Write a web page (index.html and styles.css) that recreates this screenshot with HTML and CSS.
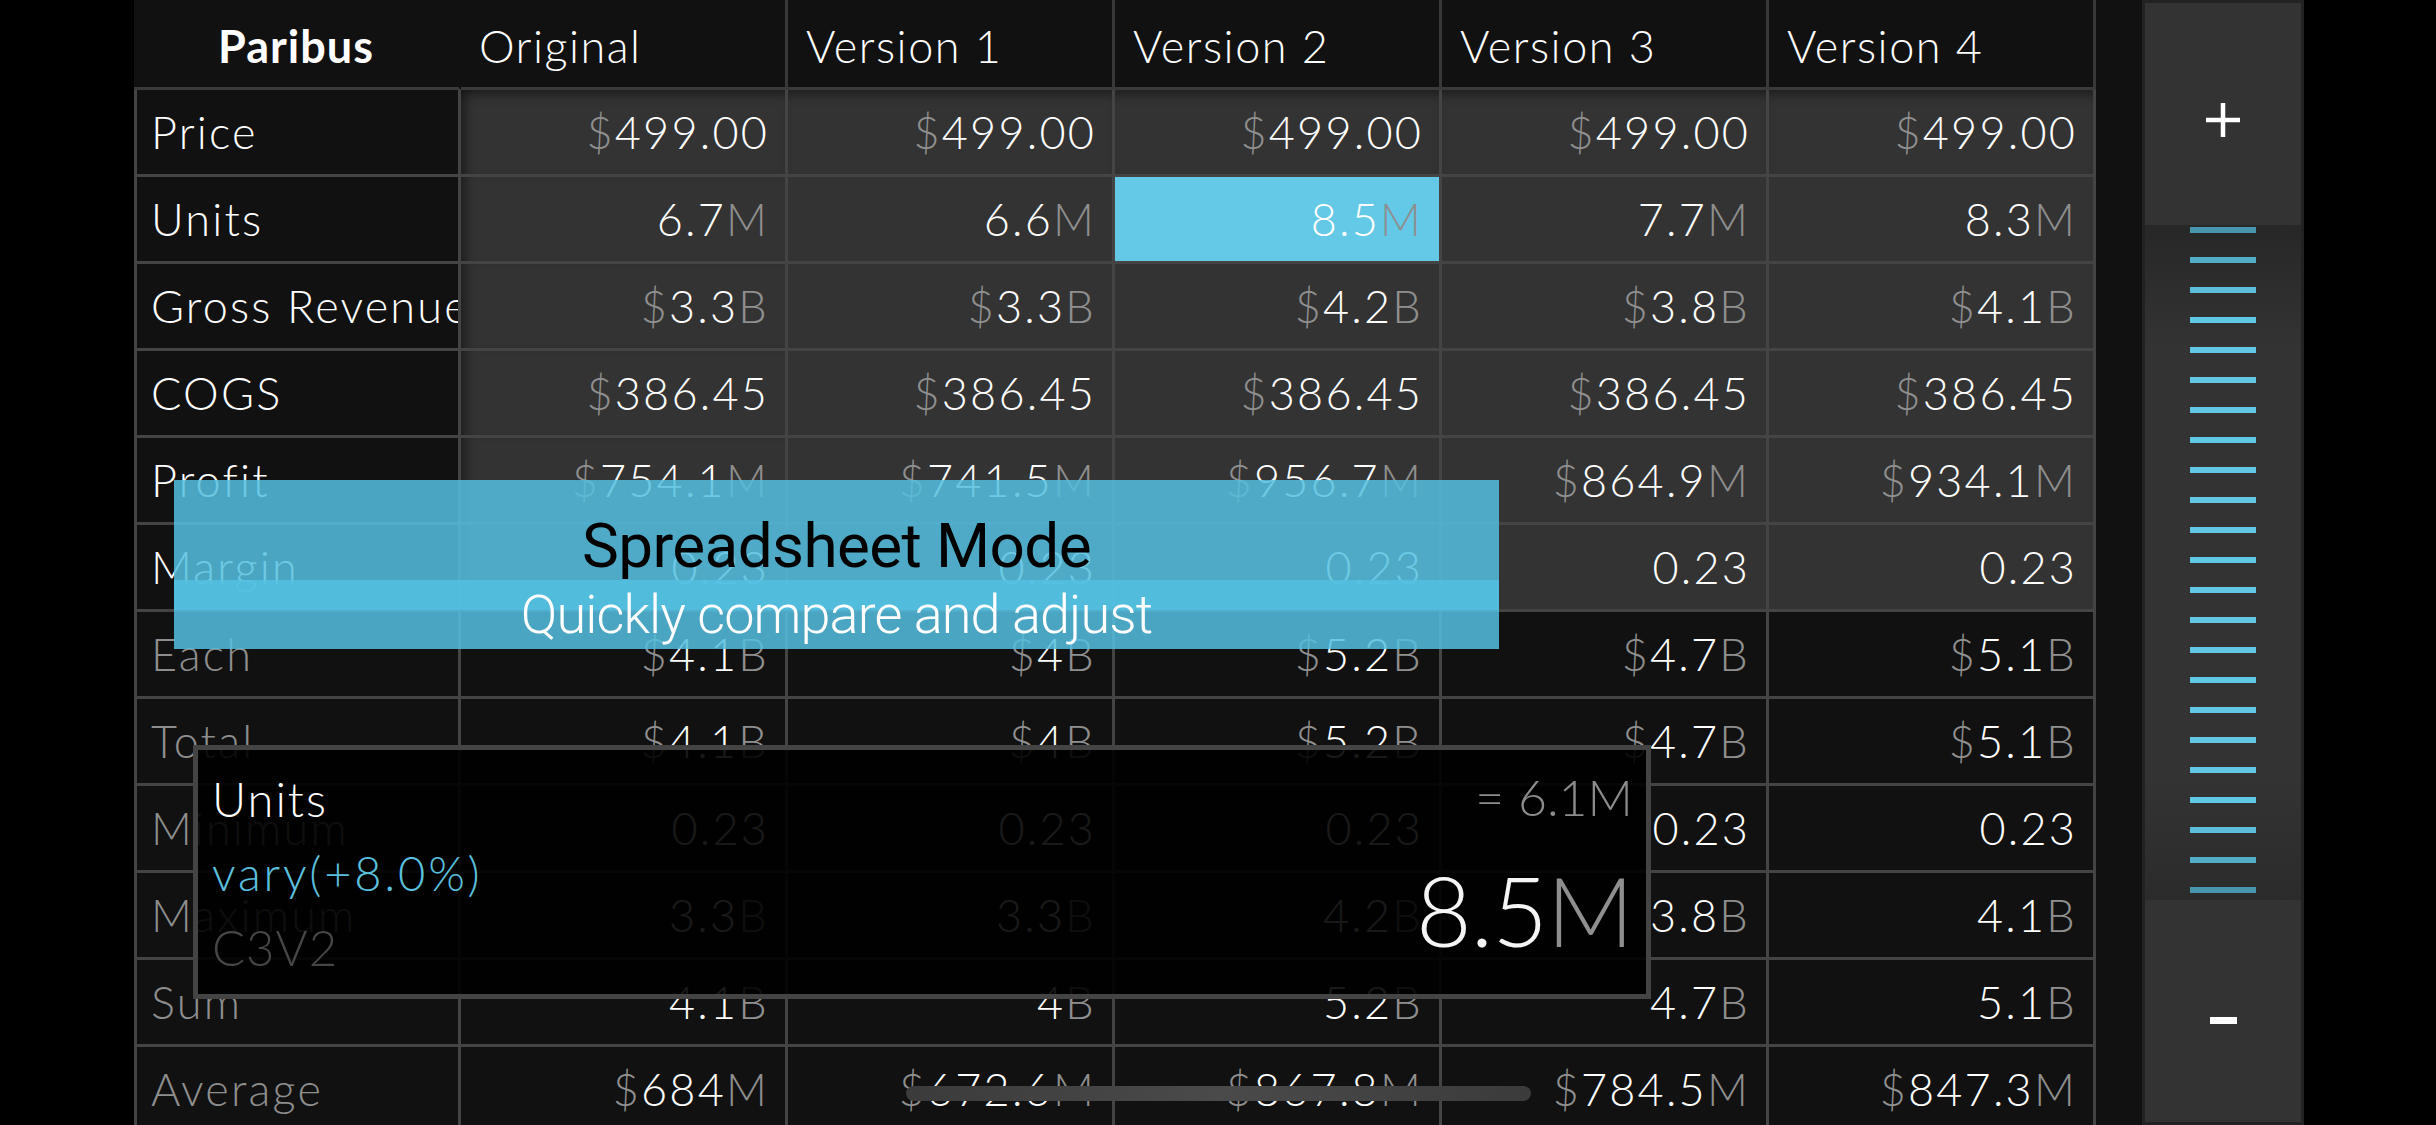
FILE: index.html
```html
<!DOCTYPE html>
<html>
<head>
<meta charset="utf-8">
<link rel="stylesheet" href="styles.css">
</head>
<body>
<div class="screen">
  <div class="gutter"></div>
  <div class="sheet">
    <div class="grid">
      <div class="c hd brand">Paribus</div>
      <div class="c hd">Original</div>
      <div class="c hd">Version 1</div>
      <div class="c hd">Version 2</div>
      <div class="c hd">Version 3</div>
      <div class="c hd">Version 4</div>

      <div class="c lb">Price</div>
      <div class="c v pn top left"><span class="u">$</span>499.00</div>
      <div class="c v pn top"><span class="u">$</span>499.00</div>
      <div class="c v pn top"><span class="u">$</span>499.00</div>
      <div class="c v pn top"><span class="u">$</span>499.00</div>
      <div class="c v pn top"><span class="u">$</span>499.00</div>

      <div class="c lb">Units</div>
      <div class="c v pn left">6.7<span class="u">M</span></div>
      <div class="c v pn">6.6<span class="u">M</span></div>
      <div class="c v sel">8.5<span class="u">M</span></div>
      <div class="c v pn">7.7<span class="u">M</span></div>
      <div class="c v pn">8.3<span class="u">M</span></div>

      <div class="c lb">Gross Revenue</div>
      <div class="c v pn left"><span class="u">$</span>3.3<span class="u">B</span></div>
      <div class="c v pn"><span class="u">$</span>3.3<span class="u">B</span></div>
      <div class="c v pn"><span class="u">$</span>4.2<span class="u">B</span></div>
      <div class="c v pn"><span class="u">$</span>3.8<span class="u">B</span></div>
      <div class="c v pn"><span class="u">$</span>4.1<span class="u">B</span></div>

      <div class="c lb">COGS</div>
      <div class="c v pn left"><span class="u">$</span>386.45</div>
      <div class="c v pn"><span class="u">$</span>386.45</div>
      <div class="c v pn"><span class="u">$</span>386.45</div>
      <div class="c v pn"><span class="u">$</span>386.45</div>
      <div class="c v pn"><span class="u">$</span>386.45</div>

      <div class="c lb">Profit</div>
      <div class="c v pn left"><span class="u">$</span>754.1<span class="u">M</span></div>
      <div class="c v pn"><span class="u">$</span>741.5<span class="u">M</span></div>
      <div class="c v pn"><span class="u">$</span>956.7<span class="u">M</span></div>
      <div class="c v pn"><span class="u">$</span>864.9<span class="u">M</span></div>
      <div class="c v pn"><span class="u">$</span>934.1<span class="u">M</span></div>

      <div class="c lb">Margin</div>
      <div class="c v pn left">0.23</div>
      <div class="c v pn">0.23</div>
      <div class="c v pn">0.23</div>
      <div class="c v pn">0.23</div>
      <div class="c v pn">0.23</div>

      <div class="c lb dim">Each</div>
      <div class="c v lo"><span class="u">$</span>4.1<span class="u">B</span></div>
      <div class="c v lo"><span class="u">$</span>4<span class="u">B</span></div>
      <div class="c v lo"><span class="u">$</span>5.2<span class="u">B</span></div>
      <div class="c v lo"><span class="u">$</span>4.7<span class="u">B</span></div>
      <div class="c v lo"><span class="u">$</span>5.1<span class="u">B</span></div>

      <div class="c lb dim">Total</div>
      <div class="c v lo"><span class="u">$</span>4.1<span class="u">B</span></div>
      <div class="c v lo"><span class="u">$</span>4<span class="u">B</span></div>
      <div class="c v lo"><span class="u">$</span>5.2<span class="u">B</span></div>
      <div class="c v lo"><span class="u">$</span>4.7<span class="u">B</span></div>
      <div class="c v lo"><span class="u">$</span>5.1<span class="u">B</span></div>

      <div class="c lb dim">Minimum</div>
      <div class="c v lo">0.23</div>
      <div class="c v lo">0.23</div>
      <div class="c v lo">0.23</div>
      <div class="c v lo">0.23</div>
      <div class="c v lo">0.23</div>

      <div class="c lb dim">Maximum</div>
      <div class="c v lo">3.3<span class="u">B</span></div>
      <div class="c v lo">3.3<span class="u">B</span></div>
      <div class="c v lo">4.2<span class="u">B</span></div>
      <div class="c v lo">3.8<span class="u">B</span></div>
      <div class="c v lo">4.1<span class="u">B</span></div>

      <div class="c lb dim">Sum</div>
      <div class="c v lo">4.1<span class="u">B</span></div>
      <div class="c v lo">4<span class="u">B</span></div>
      <div class="c v lo">5.2<span class="u">B</span></div>
      <div class="c v lo">4.7<span class="u">B</span></div>
      <div class="c v lo">5.1<span class="u">B</span></div>

      <div class="c lb dim">Average</div>
      <div class="c v lo"><span class="u">$</span>684<span class="u">M</span></div>
      <div class="c v lo"><span class="u">$</span>672.6<span class="u">M</span></div>
      <div class="c v lo"><span class="u">$</span>867.8<span class="u">M</span></div>
      <div class="c v lo"><span class="u">$</span>784.5<span class="u">M</span></div>
      <div class="c v lo"><span class="u">$</span>847.3<span class="u">M</span></div>
    </div>
  </div>
  <div class="slider">
    <div class="track">
      <div class="btn plus">
        <svg width="34" height="34" viewBox="0 0 34 34"><path d="M17 0V34M0 17H34" stroke="#fff" stroke-width="4.5" fill="none"/></svg>
      </div>
      <div class="ticks">
        <div class="tick t1"></div><div class="tick t2"></div><div class="tick t3"></div>
        <div class="tick"></div><div class="tick"></div><div class="tick"></div><div class="tick"></div>
        <div class="tick"></div><div class="tick"></div><div class="tick"></div><div class="tick"></div>
        <div class="tick"></div><div class="tick"></div><div class="tick"></div><div class="tick"></div>
        <div class="tick"></div><div class="tick"></div><div class="tick"></div><div class="tick"></div>
        <div class="tick"></div><div class="tick t3"></div><div class="tick t2"></div><div class="tick t1"></div>
      </div>
      <div class="btn minus"><span class="minus-bar"></span></div>
    </div>
  </div>
  <div class="rest"></div>
</div>

<div class="banner">
  <div class="b-title">Spreadsheet Mode</div>
  <div class="b-sub">Quickly compare and adjust</div>
</div>

<div class="popup">
  <div class="p-left">
    <div class="p-name">Units</div>
    <div class="p-vary">vary(+8.0%)</div>
    <div class="p-cell">C3V2</div>
  </div>
  <div class="p-right">
    <div class="p-eq">= 6.1M</div>
    <div class="p-big">8.5<span class="u">M</span></div>
  </div>
</div>

<div class="home"></div>
</body>
</html>
```

FILE: styles.css
```css
* { box-sizing: border-box; margin: 0; padding: 0; }
html, body { width: 2436px; height: 1125px; overflow: hidden; background: #000; }
body { font-family: "Lato", "Open Sans", sans-serif; color: #fff; position: relative; }

.screen { display: flex; height: 1125px; }
.gutter { width: 134px; flex: none; background: #000; }
.sheet { width: 2008px; flex: none; height: 1125px; background: #111; overflow: hidden; }
.rest { flex: 1; background: #000; }

.grid {
  display: grid;
  grid-template-columns: repeat(6, 327px);
  grid-template-rows: 90px repeat(12, 87px);
  width: 1962px;
}
.c {
  display: flex;
  align-items: center;
  font-size: 45px;
  font-weight: 300;
  letter-spacing: 2.2px;
  white-space: nowrap;
  overflow: hidden;
  border-right: 3px solid #444;
  border-bottom: 3px solid #444;
}
.hd { background: #111; border-right-color: #383838; border-bottom-color: #3a3a3a; padding: 4px 0 0 18px; letter-spacing: 1.5px; }
.hd.brand { justify-content: center; font-weight: 700; padding-left: 0; border-right-color: #111; letter-spacing: 1px; }
.lb { background: #111; border-left: 3px solid #444; padding-left: 14px; }
.lb.dim { color: #8e8e8e; }
.v { justify-content: flex-end; padding-right: 16px; }
.pn { background: #333; }
.lo { background: #111; }
.sel { background: #63c9e6; }
.top { box-shadow: inset 0 12px 12px -8px rgba(0,0,0,.45); }
.left { box-shadow: inset 12px 0 12px -8px rgba(0,0,0,.45); }
.top.left { box-shadow: inset 0 12px 12px -8px rgba(0,0,0,.45), inset 12px 0 12px -8px rgba(0,0,0,.45); }
.u { color: #8f8f8f; }

.slider { width: 162px; flex: none; background: #222; padding: 3px; }
.track { height: 100%; display: flex; flex-direction: column; background: #333; }
.btn { flex: none; height: 222px; display: flex; align-items: center; justify-content: center; }
.plus { padding-top: 12px; }
.minus { padding-top: 18px; }
.minus-bar { width: 27px; height: 7px; background: #fff; }
.ticks {
  flex: none;
  height: 675px;
  display: flex;
  flex-direction: column;
  align-items: center;
  gap: 24px;
  padding-top: 2px;
  background: linear-gradient(to bottom, #272727 0%, #333 18%, #333 82%, #2b2b2b 100%);
}
.tick { flex: none; width: 66px; height: 6px; background: #62c7e5; }
.tick.t1 { background: #4896ae; }
.tick.t2 { background: #52adc9; }
.tick.t3 { background: #5cbedb; }

.banner { position: absolute; left: 174px; top: 480px; width: 1325px; font-family: "Roboto", "Liberation Sans", sans-serif; }
.b-title {
  height: 130px;
  background: rgba(84,191,225,.85);
  display: flex; align-items: center; justify-content: center;
  font-size: 62px; color: #000; letter-spacing: -0.6px;
}
.b-sub {
  height: 69px;
  margin-top: -30px;
  background: rgba(84,191,225,.85);
  display: flex; align-items: center; justify-content: center;
  font-size: 54px; font-weight: 300; color: #fff; letter-spacing: -0.9px;
}

.popup {
  position: absolute; left: 193px; top: 745px;
  width: 1458px; height: 254px;
  border: 5px solid #444;
  background: rgba(0,0,0,.9);
  display: flex; justify-content: space-between;
}
.p-left { padding: 12px 0 0 14px; font-size: 47px; font-weight: 300; letter-spacing: 2px; line-height: 74px; }
.p-name { color: #fff; }
.p-vary { color: #5bc0de; letter-spacing: 2.8px; }
.p-cell { color: #464646; font-size: 49px; letter-spacing: 1px; }
.p-right { padding: 10px 13px 0 0; text-align: right; font-weight: 300; }
.p-eq { font-size: 50px; line-height: 74px; color: #8c8c8c; }
.p-big { font-size: 96px; line-height: 120px; margin-top: 16px; color: #f5f5f5; letter-spacing: -1px; }

.home {
  position: absolute; left: 906px; top: 1086px;
  width: 625px; height: 15px; border-radius: 8px;
  background: linear-gradient(90deg, #3b3b3b, #4a4a4a 50%, #3b3b3b);
}
```
